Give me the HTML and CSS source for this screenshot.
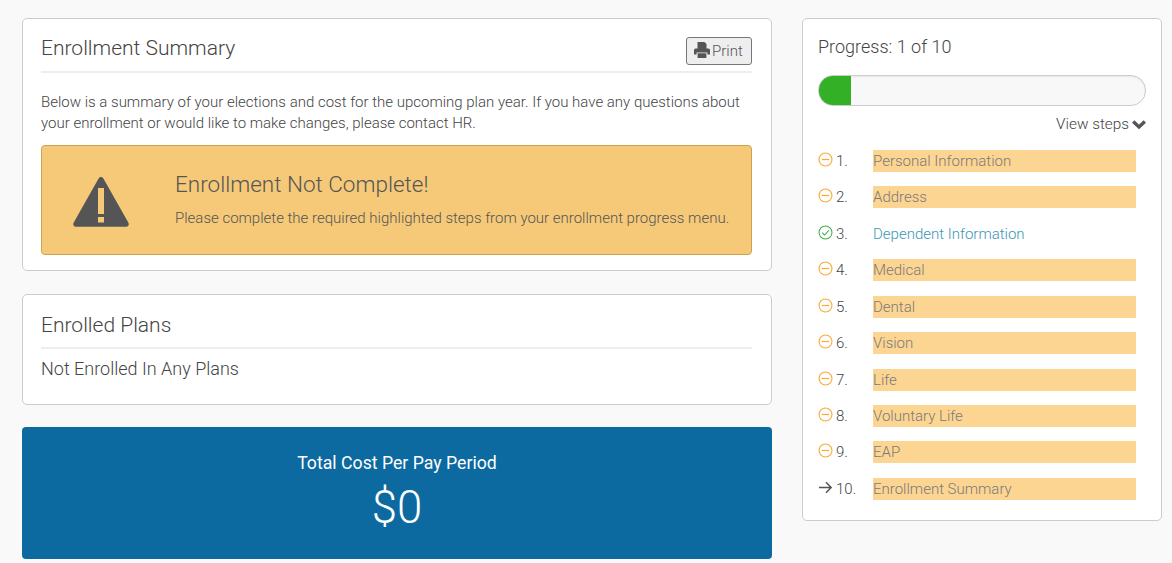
FILE: index.html
```html
<!DOCTYPE html>
<html lang="en">
<head>
  <meta charset="UTF-8">
  <meta name="viewport" content="width=device-width, initial-scale=1.0">
  <title>Enrollment Summary</title>
  <link rel="stylesheet" href="styles.css">
</head>
<body>
  <div class="page">
    <main class="main-col">
      <section class="card summary-card">
        <div class="card-head">
          <h2>Enrollment Summary</h2>
          <button class="print-btn" type="button">
            <svg class="print-icon" viewBox="0 0 16 16" width="16" height="16"><path fill="#555" d="M3.500 0h7l2 2v4.500h-9zM0 8a1.500 1.500 0 0 1 1.500-1.500h13A1.500 1.500 0 0 1 16 8v4.500h-2.600v-2H2.600v2H0zM3.600 11.200h8.800V16H3.600z"/></svg>Print
          </button>
        </div>
        <p class="intro">Below is a summary of your elections and cost for the upcoming plan year. If you have any questions about your enrollment or would like to make changes, please contact HR.</p>
        <div class="alert">
          <svg class="alert-icon" viewBox="0 0 56 50" width="56" height="50">
            <path fill="#555" d="M25.600 1.400a2.800 2.800 0 0 1 4.800 0l25 44.400a2.600 2.600 0 0 1-2.300 3.900H2.900a2.600 2.600 0 0 1-2.300-3.900z"/>
            <path fill="#f5c978" d="M25 11h6v26h-6zM25 40h6v5.500h-6z"/>
          </svg>
          <div class="alert-text">
            <h3>Enrollment Not Complete!</h3>
            <p>Please complete the required highlighted steps from your enrollment progress menu.</p>
          </div>
        </div>
      </section>

      <section class="card plans-card">
        <div class="card-head plans-head">
          <h2>Enrolled Plans</h2>
        </div>
        <p class="no-plans">Not Enrolled In Any Plans</p>
      </section>

      <section class="total">
        <div class="total-label">Total Cost Per Pay Period</div>
        <div class="total-value">$0</div>
      </section>
    </main>

    <aside class="card progress-card">
      <div class="progress-title">Progress: 1 of 10</div>
      <div class="progress-track"><div class="progress-bar"></div></div>
      <div class="view-steps">View steps
        <svg viewBox="0 0 14 10" width="14" height="11"><path fill="none" stroke="#555" stroke-width="3.400" d="M1.200 2l5.800 5.500L12.800 2"/></svg>
      </div>
      <ol class="steps">
        <li class="step"><svg class="st" viewBox="0 0 16 16"><circle cx="8" cy="8" r="6.900" fill="none" stroke="#fbaa35" stroke-width="1.200"/><path stroke="#fbaa35" stroke-width="1.300" d="M4 8h8"/></svg><span class="num">1.</span><a class="todo">Personal Information</a></li>
        <li class="step"><svg class="st" viewBox="0 0 16 16"><circle cx="8" cy="8" r="6.900" fill="none" stroke="#fbaa35" stroke-width="1.200"/><path stroke="#fbaa35" stroke-width="1.300" d="M4 8h8"/></svg><span class="num">2.</span><a class="todo">Address</a></li>
        <li class="step"><svg class="st" viewBox="0 0 16 16"><circle cx="8" cy="8" r="6.900" fill="none" stroke="#3fae49" stroke-width="1.100"/><path fill="none" stroke="#3fae49" stroke-width="1.100" d="M4.500 8.200l2.500 2.500 4.500-5"/></svg><span class="num">3.</span><a class="done">Dependent Information</a></li>
        <li class="step"><svg class="st" viewBox="0 0 16 16"><circle cx="8" cy="8" r="6.900" fill="none" stroke="#fbaa35" stroke-width="1.200"/><path stroke="#fbaa35" stroke-width="1.300" d="M4 8h8"/></svg><span class="num">4.</span><a class="todo">Medical</a></li>
        <li class="step"><svg class="st" viewBox="0 0 16 16"><circle cx="8" cy="8" r="6.900" fill="none" stroke="#fbaa35" stroke-width="1.200"/><path stroke="#fbaa35" stroke-width="1.300" d="M4 8h8"/></svg><span class="num">5.</span><a class="todo">Dental</a></li>
        <li class="step"><svg class="st" viewBox="0 0 16 16"><circle cx="8" cy="8" r="6.900" fill="none" stroke="#fbaa35" stroke-width="1.200"/><path stroke="#fbaa35" stroke-width="1.300" d="M4 8h8"/></svg><span class="num">6.</span><a class="todo">Vision</a></li>
        <li class="step"><svg class="st" viewBox="0 0 16 16"><circle cx="8" cy="8" r="6.900" fill="none" stroke="#fbaa35" stroke-width="1.200"/><path stroke="#fbaa35" stroke-width="1.300" d="M4 8h8"/></svg><span class="num">7.</span><a class="todo">Life</a></li>
        <li class="step"><svg class="st" viewBox="0 0 16 16"><circle cx="8" cy="8" r="6.900" fill="none" stroke="#fbaa35" stroke-width="1.200"/><path stroke="#fbaa35" stroke-width="1.300" d="M4 8h8"/></svg><span class="num">8.</span><a class="todo">Voluntary Life</a></li>
        <li class="step"><svg class="st" viewBox="0 0 16 16"><circle cx="8" cy="8" r="6.900" fill="none" stroke="#fbaa35" stroke-width="1.200"/><path stroke="#fbaa35" stroke-width="1.300" d="M4 8h8"/></svg><span class="num">9.</span><a class="todo">EAP</a></li>
        <li class="step"><svg class="st" viewBox="0 0 16 16"><path fill="none" stroke="#555" stroke-width="1.600" d="M1 8h13M8.500 2.500L14 8l-5.500 5.500"/></svg><span class="num">10.</span><a class="todo">Enrollment Summary</a></li>
      </ol>
    </aside>
  </div>
</body>
</html>
```

FILE: styles.css
```css
html, body {
  height: 100%;
  overflow: hidden;
}

body {
  font-family: Roboto, sans-serif;
  font-weight: 300;
  margin: 0;
  background: #f9f9f9;
  color: #444;
  font-size: 15px;
}

.page {
  display: flex;
  align-items: flex-start;
  gap: 30px;
  padding: 18px 10px 0 22px;
}

.main-col {
  width: 750px;
  flex: none;
}

.card {
  background: white;
  border: 1px solid #ccc;
  border-radius: 5px;
  box-sizing: border-box;
}

.summary-card {
  height: 253px;
  padding: 0 19px 0 18px;
}

.card-head {
  display: flex;
  justify-content: space-between;
  align-items: center;
  height: 52px;
  border-bottom: 2px solid #eee;
}

h2 {
  margin: 6px 0 0;
  font-size: 21px;
  font-weight: 300;
  color: #444;
}

.plans-head h2 {
  margin-top: 8px;
}

.print-btn {
  display: flex;
  align-items: center;
  gap: 2px;
  box-sizing: border-box;
  width: 66px;
  height: 28px;
  padding: 0 0 0 7px;
  margin-top: 12px;
  background: #eee;
  border: 1px solid #777;
  border-radius: 3px;
  font-family: inherit;
  font-weight: 300;
  font-size: 15px;
  color: #555;
}

.print-icon {
  margin-top: -3px;
}

.intro {
  margin: 19px 0 0;
  line-height: 21px;
  font-size: 15px;
  color: #444;
}

.alert {
  display: flex;
  align-items: center;
  gap: 46px;
  box-sizing: border-box;
  height: 110px;
  margin-top: 11px;
  padding: 0 0 0 31px;
  background: #f5c978;
  border: 1px solid #cfa24f;
  border-radius: 4px;
  color: #555;
}

.alert-icon {
  flex: none;
  margin-top: 3px;
}

.alert-text {
  padding-bottom: 3px;
}

.alert h3 {
  margin: 0 0 12px;
  font-size: 22.500px;
  font-weight: 300;
}

.alert p {
  margin: 0;
  font-size: 15px;
}

.plans-card {
  height: 111px;
  margin-top: 23px;
  padding: 0 19px 0 18px;
}

.no-plans {
  margin: 8px 0 0;
  font-size: 18px;
  line-height: 24px;
}

.total {
  height: 132px;
  margin-top: 22px;
  background: #0d6aa1;
  border-radius: 4px;
  color: white;
  text-align: center;
  padding-top: 25px;
  box-sizing: border-box;
}

.total-label {
  font-size: 17.700px;
  font-weight: 400;
  line-height: 22px;
}

.total-value {
  font-size: 45.500px;
  line-height: 56px;
  margin-top: 6px;
}

.progress-card {
  width: 360px;
  height: 503px;
  flex: none;
  padding: 0 15px 0 14px;
}

.progress-title {
  font-size: 18px;
  line-height: 22px;
  margin: 17px 0 0 1px;
}

.progress-track {
  height: 29px;
  margin: 17px 0 0 1px;
  background: #f8f8f8;
  border: 1px solid #ccc;
  border-radius: 15px;
  overflow: hidden;
  box-shadow: inset 0 1px 2px rgba(0, 0, 0, 0.08);
}

.progress-bar {
  width: 32px;
  height: 100%;
  background: #34b026;
}

.view-steps {
  display: flex;
  justify-content: flex-end;
  align-items: center;
  gap: 3px;
  font-size: 15.300px;
  line-height: 20px;
  margin-top: 8px;
}

.steps {
  list-style: none;
  margin: 16px 0 0;
  padding: 0 10px 0 0;
}

.step {
  display: flex;
  align-items: center;
  height: 22px;
  margin-bottom: 14.430px;
  font-size: 15px;
}

.st {
  width: 15px;
  height: 15px;
  flex: none;
  margin: -3px 3px 0 1px;
}

.num {
  width: 37px;
  flex: none;
}

.step a {
  flex: 1;
  line-height: 22px;
}

.todo {
  background: #fdd592;
  color: #7a7a7a;
}

.done {
  color: #3d95b5;
}
```
